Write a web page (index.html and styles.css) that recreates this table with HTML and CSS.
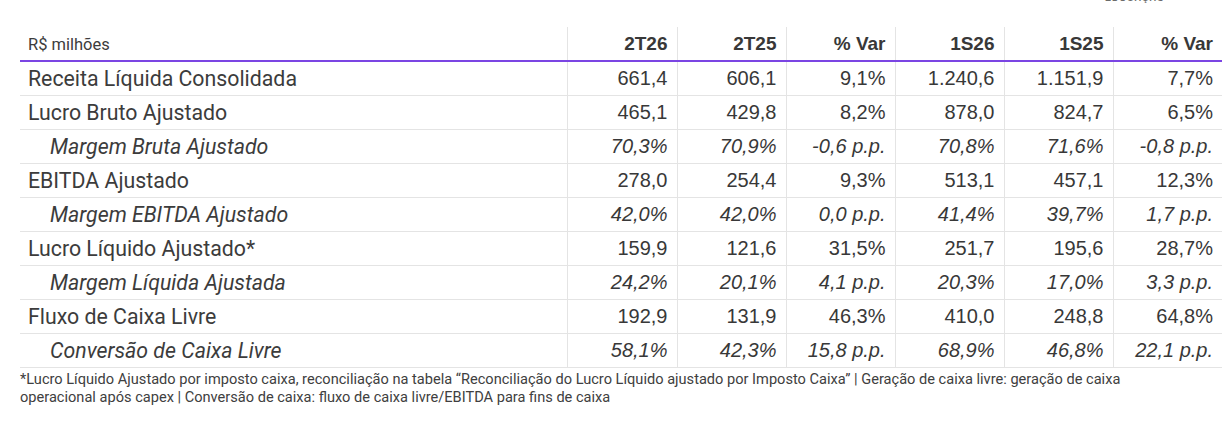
FILE: index.html
```html
<!DOCTYPE html>
<html lang="pt-BR">
<head>
<meta charset="utf-8">
<title>Destaques financeiros</title>
<link rel="stylesheet" href="styles.css">
</head>
<body>
<div class="page">
  <div class="topbar"><span class="logo-cut">EDUCAÇÃO</span></div>
  <table class="fin">
    <colgroup>
      <col class="c-label"><col class="c-num1"><col class="c-num"><col class="c-num"><col class="c-num"><col class="c-num"><col class="c-num">
    </colgroup>
    <thead>
      <tr>
        <th class="lbl">R$ milhões</th>
        <th>2T26</th><th>2T25</th><th>% Var</th><th>1S26</th><th>1S25</th><th>% Var</th>
      </tr>
    </thead>
    <tbody>
      <tr><td class="lbl">Receita Líquida Consolidada</td><td>661,4</td><td>606,1</td><td>9,1%</td><td>1.240,6</td><td>1.151,9</td><td>7,7%</td></tr>
      <tr><td class="lbl">Lucro Bruto Ajustado</td><td>465,1</td><td>429,8</td><td>8,2%</td><td>878,0</td><td>824,7</td><td>6,5%</td></tr>
      <tr class="sub"><td class="lbl">Margem Bruta Ajustado</td><td>70,3%</td><td>70,9%</td><td>-0,6 p.p.</td><td>70,8%</td><td>71,6%</td><td>-0,8 p.p.</td></tr>
      <tr><td class="lbl">EBITDA Ajustado</td><td>278,0</td><td>254,4</td><td>9,3%</td><td>513,1</td><td>457,1</td><td>12,3%</td></tr>
      <tr class="sub"><td class="lbl">Margem EBITDA Ajustado</td><td>42,0%</td><td>42,0%</td><td>0,0 p.p.</td><td>41,4%</td><td>39,7%</td><td>1,7 p.p.</td></tr>
      <tr><td class="lbl">Lucro Líquido Ajustado*</td><td>159,9</td><td>121,6</td><td>31,5%</td><td>251,7</td><td>195,6</td><td>28,7%</td></tr>
      <tr class="sub"><td class="lbl">Margem Líquida Ajustada</td><td>24,2%</td><td>20,1%</td><td>4,1 p.p.</td><td>20,3%</td><td>17,0%</td><td>3,3 p.p.</td></tr>
      <tr><td class="lbl">Fluxo de Caixa Livre</td><td>192,9</td><td>131,9</td><td>46,3%</td><td>410,0</td><td>248,8</td><td>64,8%</td></tr>
      <tr class="sub"><td class="lbl">Conversão de Caixa Livre</td><td>58,1%</td><td>42,3%</td><td>15,8 p.p.</td><td>68,9%</td><td>46,8%</td><td>22,1 p.p.</td></tr>
    </tbody>
  </table>
  <p class="note">*Lucro Líquido Ajustado por imposto caixa, reconciliação na tabela “Reconciliação do Lucro Líquido ajustado por Imposto Caixa” | Geração de caixa livre: geração de caixa<br>operacional após capex | Conversão de caixa: fluxo de caixa livre/EBITDA para fins de caixa</p>
</div>
</body>
</html>
```

FILE: styles.css
```css
html, body {
  margin: 0;
  padding: 0;
  background: #ffffff;
}

.page {
  width: 1231px;
  height: 421px;
  overflow: hidden;
  padding: 0 0 0 20px;
  box-sizing: border-box;
}

.topbar {
  height: 27px;
  display: flex;
  justify-content: flex-end;
  padding-right: 66px;
  overflow: hidden;
}

.logo-cut {
  font-family: "Liberation Sans", Arial, sans-serif;
  font-weight: bold;
  font-size: 9px;
  letter-spacing: 1px;
  color: #6b6b6b;
  line-height: 9px;
  margin-top: -6px;
}

.fin {
  border-collapse: collapse;
  table-layout: fixed;
  width: 1202px;
}

.c-label { width: 547px; }
.c-num1 { width: 110px; }
.c-num { width: 109px; }

.fin th,
.fin td {
  padding: 0 9px 0 0;
  text-align: right;
  white-space: nowrap;
  border-left: 1px solid #e4e4e4;
  font-family: "Liberation Sans", Arial, sans-serif;
  color: #383838;
}

.fin th {
  height: 32px;
  font-size: 19px;
  font-weight: bold;
  border-bottom: 2px solid #7b45e3;
  padding-top: 1px;
}

.fin td {
  height: 33px;
  font-size: 20px;
  border-bottom: 1px solid #e4e4e4;
}

.fin .lbl {
  border-left: none;
  text-align: left;
  padding-left: 8px;
  font-family: Roboto, "Noto Sans", sans-serif;
  color: #3c3c3c;
}

.fin th.lbl {
  font-weight: normal;
  font-size: 16.5px;
}

.fin td.lbl {
  font-size: 21.3px;
}

.sub td {
  font-style: italic;
}

.sub td.lbl {
  padding-left: 30px;
}

.note {
  margin: 2px 0 0 0;
  font-family: Roboto, "Noto Sans", sans-serif;
  font-size: 14.6px;
  line-height: 18px;
  color: #404040;
}
```
